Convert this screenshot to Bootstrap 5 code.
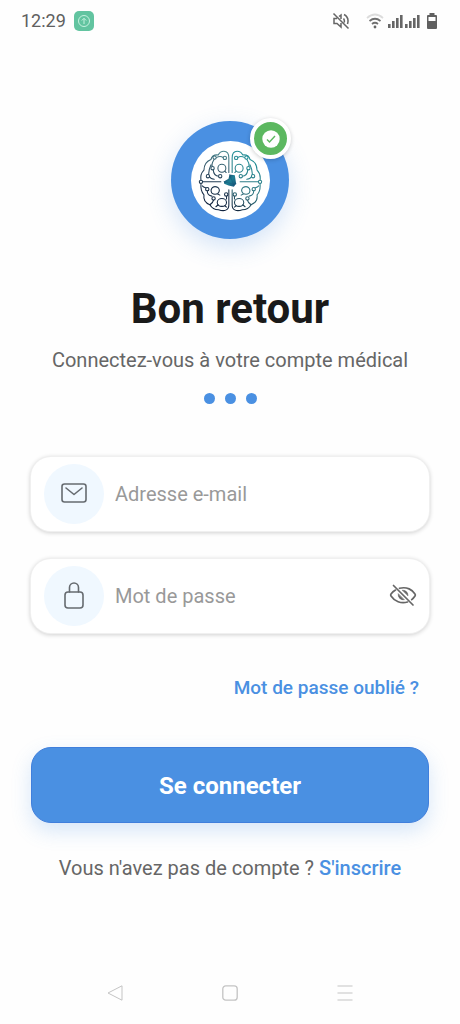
<!DOCTYPE html>
<html lang="fr">
<head>
<meta charset="utf-8">
<meta name="viewport" content="width=device-width, initial-scale=1">
<title>Connexion</title>
<link href="https://cdn.jsdelivr.net/npm/bootstrap@5.3.0/dist/css/bootstrap.min.css" rel="stylesheet">
<style>
  :root { --brand: #4a90e2; --ink: #1a1a1a; --soft: #666; }
  body { font-family: Roboto, "Liberation Sans", sans-serif; background: #fefefe; color: var(--soft); font-size: 20px; line-height: 28px; }
  svg { display: block; flex: none; }
  .status { height: 42px; padding: 0 22px 0 21px; font-size: 18px; color: #606060; }
  .status-app { width: 20px; height: 20px; border-radius: 5px; background: #62c4a0; }
  .screen { padding: 79px 31px 0; }
  .logo { width: 118px; height: 118px; background: var(--brand); box-shadow: 0 8px 24px rgba(74, 144, 226, .24); }
  .logo-face { width: 79px; height: 79px; background: #fff; }
  .verified { top: -3px; right: -2px; width: 41px; height: 41px; background: #5cb860; border: 4px solid #fff; box-shadow: 0 1px 4px rgba(0, 0, 0, .2); }
  .title { margin-top: 45px; font-size: 42px; line-height: 50px; font-weight: 700; color: var(--ink); }
  .subtitle { margin-top: 12px; }
  .dots { gap: 10px; margin-top: 19px; }
  .dots span { width: 11px; height: 11px; background: var(--brand); }
  .fields { gap: 28px; margin-top: 53px; }
  .field { height: 74px; padding: 0 12px 0 13px; gap: 11px; border-radius: 20px; background: #fff; box-shadow: 0 0 0 1px #f0f0f0, 0 1px 4px 1px rgba(0, 0, 0, .18); }
  .field-icon { width: 60px; height: 60px; background: #f0f8ff; }
  .field .form-control { font-size: 20px; line-height: 28px; color: #333; }
  .field .form-control::placeholder { color: #999; opacity: 1; }
  .field .form-control:focus { box-shadow: none; }
  .forgot { margin-top: 41px; padding-right: 10px; font-size: 19px; }
  .accent { color: var(--brand); font-weight: 500; }
  .login { height: 76px; margin-top: 45px; padding: 8px 12px 6px; border: 1px solid #407fdc; border-radius: 20px; background: var(--brand); color: #fff; font-size: 24px; font-weight: 700; box-shadow: 0 8px 20px rgba(74, 144, 226, .22); }
  .login:hover { background: #3b82d6; color: #fff; }
  .signup { margin-top: 31px; }
  .system-nav { height: 62px; padding: 0 57px; color: #c4c4c4; }
  .system-nav .btn { color: inherit; }
</style>
</head>
<body>
<div class="min-vh-100 d-flex flex-column">
  <header class="status d-flex align-items-center">
    <span>12:29</span>
    <span class="status-app d-flex align-items-center justify-content-center ms-2">
      <svg width="14" height="14" viewBox="0 0 14 14" fill="none" stroke="#c5f2df" stroke-width="1"><circle cx="7" cy="7" r="5.5"/><path d="M7 10V4.5M4.8 6.5 7 4.3l2.2 2.2"/></svg>
    </span>
    <svg class="ms-auto" width="18" height="18" viewBox="0 0 18 18" fill="none" stroke="#666" stroke-width="1.500"><path d="M7 4.500 9 3v4M5 6.500H2v5h3L9 15v-4M11.500 6.500q1.500 2 .5 4M12 2.500q5.500 3 3.500 9.500M1.500 1.500l15 15"/></svg>
    <svg class="ms-3" width="18" height="16" viewBox="0 0 18 16" fill="none" stroke-width="1.700"><path d="M1 5q8-7 16 0" stroke="#dcdcdc"/><path d="M3.500 8q5.500-4.500 11 0M6 11q3-2.500 6 0" stroke="#707070"/><circle cx="9" cy="14" r="1.400" fill="#666"/></svg>
    <svg class="ms-1" width="34" height="16" viewBox="0 0 34 16" fill="#666"><path d="M0 11h2.600v4H0zM4 8h2.600v7H4zM8 5h2.600v10H8zM12 2h2.600v13H12zM17 11h2.600v4H17zM21 8h2.600v7H21zM25 5h2.600v10H25zM29 2h2.600v13H29z"/></svg>
    <svg class="ms-1" width="12" height="18" viewBox="0 0 12 18"><path d="M3.500 1h5v2H10q1 0 1 1v12q0 1-1 1H2q-1 0-1-1V4q0-1 1-1h1.500z" fill="#606060"/><path d="M2.500 5h7v4h-7z" fill="#fff"/></svg>
  </header>

  <main class="screen d-flex flex-column">
    <div class="logo rounded-circle position-relative align-self-center d-flex align-items-center justify-content-center">
      <div class="logo-face rounded-circle overflow-hidden">
        <svg width="79" height="79" viewBox="105 105 238 238" fill="none" stroke-width="3.200" stroke-linecap="round" stroke-linejoin="round">
          <defs>
            <linearGradient id="leftTone" gradientUnits="userSpaceOnUse" x1="215" y1="135" x2="160" y2="290"><stop offset="0" stop-color="#4a8a91"/><stop offset=".5" stop-color="#29465c"/><stop offset="1" stop-color="#10233f"/></linearGradient>
            <linearGradient id="rightTone" gradientUnits="userSpaceOnUse" x1="150" y1="170" x2="215" y2="310"><stop offset="0" stop-color="#258e96"/><stop offset=".6" stop-color="#327681"/><stop offset="1" stop-color="#14283f"/></linearGradient>
            <linearGradient id="coreTone" x1="0" y1="0" x2="1" y2="1"><stop offset="0" stop-color="#1e365b"/><stop offset=".5" stop-color="#1d8095"/><stop offset="1" stop-color="#174e75"/></linearGradient>
            <g id="hemisphere">
              <path d="M219 200V156C219 142 213 136 204 136C195 136 190 141 187 147C175 146 167 152 165 161C153 166 144 176 144 193C136 201 133 212 135 224V234C134 246 136 259 144 267C142 280 149 292 162 297C167 306 176 312 188 312C205 318 219 314 219 298V252"/>
              <path d="M181 155q13-7 21 0M175 160c-5 8-9 13-6 22M158 207c1-11 1-19 7-30M160 212q5 8 15 8M172 192c1 13 6 19 17 19M140 228h55M139 240c7 7 12 5 14 9M154 255c0 9 4 15 14 16M173 283c-1 6-4 9-11 14M212 271v9"/>
              <circle cx="198" cy="187" r="12"/><path d="m207 196 4 4"/>
              <path d="M170 245q7-5 16 0 9 9 0 18-10 5-18-1-6-9 2-17M184 264l8 4"/>
              <ellipse cx="198" cy="290" rx="14" ry="12"/><path d="m207 300 5 4M180 303l7-6"/>
              <g fill="#fff"><circle cx="176" cy="155" r="5"/><circle cx="207" cy="156" r="5"/><circle cx="170" cy="187" r="5"/><circle cx="156" cy="211" r="5"/><circle cx="193" cy="211" r="5"/><circle cx="135" cy="228" r="5"/><circle cx="154" cy="250" r="5"/><circle cx="173" cy="278" r="5"/><circle cx="211" cy="266" r="5"/></g>
            </g>
          </defs>
          <use href="#hemisphere" stroke="url(#leftTone)"/>
          <use href="#hemisphere" stroke="url(#rightTone)" transform="translate(448 0) scale(-1 1)"/>
          <path d="M204 227l14-8 3-13 16 2 4 26-7 9-16-4-13-5z" fill="url(#coreTone)"/>
          <path d="M221 206l12 30 8-2M204 227l29 9" stroke="#174e75" stroke-width="1"/>
        </svg>
      </div>
      <span class="verified position-absolute rounded-circle d-flex align-items-center justify-content-center">
        <svg width="18" height="18" viewBox="0 0 18 18"><circle cx="9" cy="9" r="8.700" fill="#fff"/><path d="M5 9.500 7.500 12 13 6" fill="none" stroke="#5cb860" stroke-width="1.400"/></svg>
      </span>
    </div>

    <h1 class="title text-center mb-0">Bon retour</h1>
    <p class="subtitle text-center mb-0">Connectez-vous à votre compte médical</p>
    <div class="dots d-flex justify-content-center"><span class="rounded-circle"></span><span class="rounded-circle"></span><span class="rounded-circle"></span></div>

    <form class="d-flex flex-column" onsubmit="return false">
      <div class="fields d-flex flex-column">
        <div class="field d-flex align-items-center">
          <label for="email" class="field-icon rounded-circle flex-shrink-0 d-flex align-items-center justify-content-center" aria-label="Adresse e-mail">
            <svg width="26" height="24" viewBox="0 0 26 24" fill="none" stroke="#666b70" stroke-width="1.600" stroke-linecap="round" stroke-linejoin="round"><rect x="1" y="2" width="24" height="18" rx="2.500"/><path d="m5 6 8 6.500L21 6"/></svg>
          </label>
          <input id="email" type="email" class="form-control border-0 bg-transparent p-0" placeholder="Adresse e-mail">
        </div>
        <div class="field d-flex align-items-center">
          <label for="password" class="field-icon rounded-circle flex-shrink-0 d-flex align-items-center justify-content-center" aria-label="Mot de passe">
            <svg width="22" height="30" viewBox="0 0 22 30" fill="none" stroke="#666b70" stroke-width="1.600" stroke-linecap="round"><rect x="2" y="11" width="18" height="16" rx="3"/><path d="M6.500 11V6.500a4.500 4.500 0 0 1 9 0V11"/></svg>
          </label>
          <input id="password" type="password" class="form-control border-0 bg-transparent p-0" placeholder="Mot de passe">
          <button type="button" class="btn border-0 p-0" aria-label="Afficher le mot de passe">
            <svg width="28" height="24" viewBox="0 0 28 24" fill="none" stroke="#666" stroke-width="1.700" stroke-linecap="round"><path d="M4.500 1.500 24 21M10.500 4.300C18 2.300 23.500 6 26 10q.7 1 0 2-1.300 2-3.300 3.600M6.500 6.100Q3.800 7.700 2 10q-.7 1 0 2C5.500 17.300 12 20 18.500 18"/><path d="M13.500 6.200a5 5 0 0 1 5.500 5.300zM9.200 10a5 5 0 0 0 5.800 5.800z" fill="#666" stroke-width=".6"/></svg>
          </button>
        </div>
      </div>
      <div class="forgot text-end"><a href="#" class="accent text-decoration-none">Mot de passe oublié ?</a></div>
      <button type="submit" class="login btn w-100">Se connecter</button>
    </form>
    <p class="signup text-center mb-0">Vous n'avez pas de compte ? <a href="#" class="accent text-decoration-none">S'inscrire</a></p>
  </main>

  <nav class="system-nav mt-auto d-flex align-items-center" aria-label="Système">
    <button class="btn border-0 p-0 flex-fill d-flex justify-content-center" aria-label="Retour"><svg width="16" height="16" viewBox="0 0 16 16" fill="none" stroke="currentColor" stroke-linejoin="round"><path d="M15 .8v14.400L1 8z"/></svg></button>
    <button class="btn border-0 p-0 flex-fill d-flex justify-content-center" aria-label="Accueil"><svg width="16" height="16" viewBox="0 0 16 16" fill="none" stroke="currentColor" stroke-width="1.300"><rect x=".8" y=".8" width="14.400" height="14.400" rx="3"/></svg></button>
    <button class="btn border-0 p-0 flex-fill d-flex justify-content-center" aria-label="Applications"><svg width="16" height="16" viewBox="0 0 16 16" fill="none" stroke="currentColor" stroke-width="1.200"><path d="M.5 1h15M.5 8h15M.5 15h15"/></svg></button>
  </nav>
</div>
<script src="https://cdn.jsdelivr.net/npm/bootstrap@5.3.0/dist/js/bootstrap.bundle.min.js"></script>
</body>
</html>
